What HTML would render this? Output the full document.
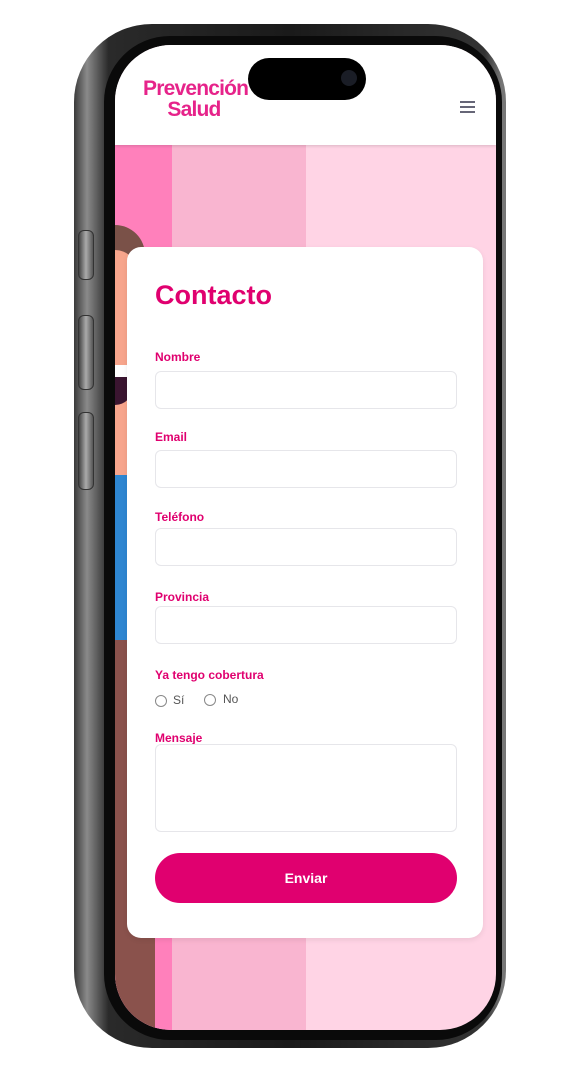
<!DOCTYPE html>
<html><head><meta charset="utf-8"><style>
*{margin:0;padding:0;box-sizing:border-box}
body{width:566px;height:1080px;background:#fff;position:relative;overflow:hidden;font-family:"Liberation Sans",sans-serif}
.a{position:absolute}
.frame{left:74px;top:24px;width:432px;height:1024px;border-radius:78px;background:linear-gradient(90deg,#3a3a3a,#8a8a8a 3%,#2a2a2a 8%,#1a1a1a 50%,#333 95%,#777 99%);}
.bezel{left:104px;top:36px;width:398px;height:1004px;border-radius:66px;background:#0a0a0a}
.screen{left:115px;top:45px;width:381px;height:985px;border-radius:56px;overflow:hidden;background:#ffd4e5}
.btn{left:78px;width:16px;border-radius:6px;background:linear-gradient(90deg,#444,#aaa,#555);border:1px solid #333}
.lbl{position:absolute;left:28px;font-size:12px;font-weight:bold;color:#e0006f}
.in{position:absolute;left:28px;width:302px;height:38px;border:1px solid #e6e6ea;border-radius:6px;background:#fff}
</style></head><body>
<div class="a frame"></div>
<div class="a btn" style="top:230px;height:50px"></div>
<div class="a btn" style="top:315px;height:75px"></div>
<div class="a btn" style="top:412px;height:78px"></div>
<div class="a bezel"></div>
<div class="a screen">
  <div class="a" style="left:0;top:100px;width:57px;height:900px;background:#ff80bb"></div>
  <div class="a" style="left:57px;top:100px;width:134px;height:900px;background:#f9b5d0"></div>
  <!-- character -->
  <div class="a" style="left:-30px;top:180px;width:60px;height:80px;border-radius:30px 30px 0 0;background:#7a5148"></div>
  <div class="a" style="left:0;top:205px;width:22px;height:250px;border-radius:0 40px 40px 0;background:#f7a58c"></div>
  <div class="a" style="left:0;top:320px;width:18px;height:40px;background:#3a1530;border-radius:0 20px 20px 0"></div>
  <div class="a" style="left:0;top:320px;width:20px;height:12px;background:#fff"></div>
  <div class="a" style="left:0;top:430px;width:40px;height:165px;background:#2e86d1"></div>
  <div class="a" style="left:0;top:595px;width:40px;height:400px;background:#8a524c"></div>
  <div class="a" style="left:0;top:0;width:381px;height:100px;background:#fff;box-shadow:0 1px 3px rgba(0,0,0,.15)"></div>
  <div class="a" style="left:28px;top:33px;font-size:21px;font-weight:bold;color:#e6238a;line-height:21px;letter-spacing:-0.8px;text-align:center;width:102px">Prevención<br>Salud</div>
  <div class="a" style="left:345px;top:56px;width:15px;height:2px;background:#667;box-shadow:0 5px 0 #667,0 10px 0 #667"></div>
  <div class="a" style="left:133px;top:13px;width:118px;height:42px;border-radius:21px;background:#000"></div>
  <div class="a" style="left:226px;top:25px;width:16px;height:16px;border-radius:8px;background:#1a1d26"></div>
  <!-- card -->
  <div class="a" style="left:12px;top:202px;width:356px;height:691px;background:#fff;border-radius:14px;box-shadow:0 2px 6px rgba(0,0,0,.08)">
    <div class="a" style="left:28px;top:33px;font-size:27px;font-weight:bold;color:#e0006f">Contacto</div>
    <div class="lbl" style="top:103px">Nombre</div><div class="in" style="top:124px"></div>
    <div class="lbl" style="top:183px">Email</div><div class="in" style="top:203px"></div>
    <div class="lbl" style="top:263px">Teléfono</div><div class="in" style="top:281px"></div>
    <div class="lbl" style="top:343px">Provincia</div><div class="in" style="top:359px"></div>
    <div class="lbl" style="top:421px">Ya tengo cobertura</div>
    <div class="a" style="left:28px;top:448px;width:12px;height:12px;border:1px solid #888;border-radius:50%"></div>
    <div class="a" style="left:46px;top:446px;font-size:12px;color:#555">Sí</div>
    <div class="a" style="left:77px;top:447px;width:12px;height:12px;border:1px solid #888;border-radius:50%"></div>
    <div class="a" style="left:96px;top:445px;font-size:12px;color:#555">No</div>
    <div class="lbl" style="top:484px">Mensaje</div>
    <div class="in" style="top:497px;height:88px"></div>
    <div class="a" style="left:28px;top:606px;width:302px;height:50px;border-radius:25px;background:#e0006f;color:#fff;font-size:14px;font-weight:bold;text-align:center;line-height:50px">Enviar</div>
  </div>
</div>
</body></html>
